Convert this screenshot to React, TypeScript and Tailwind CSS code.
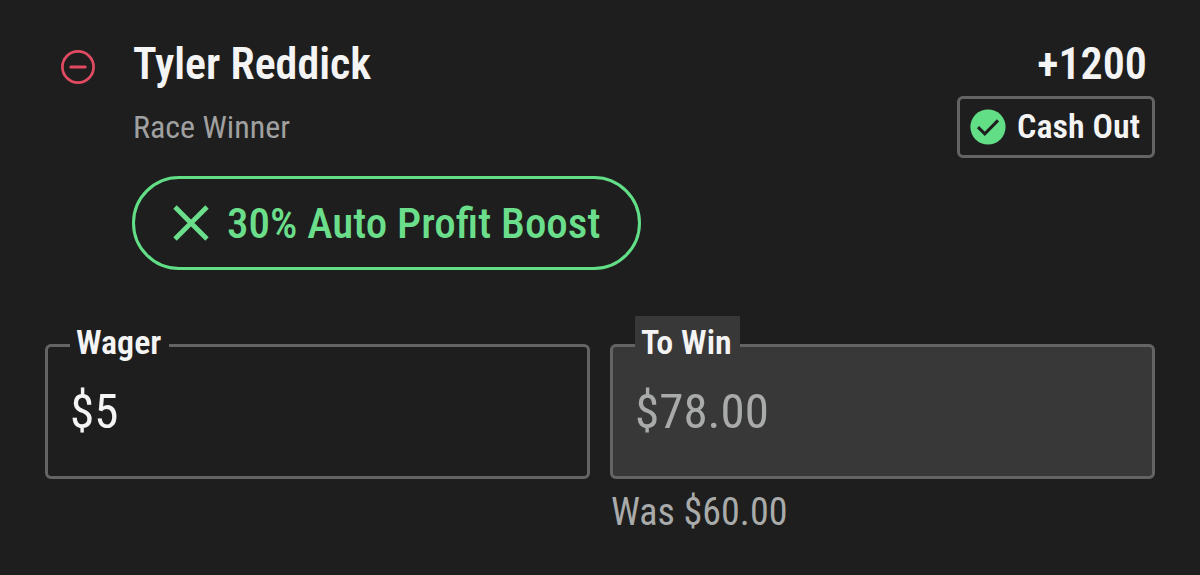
import { useState } from 'react';
import { clsx } from 'clsx';

interface MoneyFieldProps {
    id: string;
    label: string;
    value: string;
    note?: string;
    onChange?: (value: string) => void;
}

function MoneyField({ id, label, value, note, onChange }: MoneyFieldProps) {
    const readOnly = !onChange;

    return (
        <div className="min-w-0 flex-1">
            <fieldset
                className={clsx(
                    'min-w-0 rounded-md border-3 border-[#636564] px-[22px] pb-[26px]',
                    readOnly && 'bg-[#383838]'
                )}
            >
                <legend className={clsx('pr-2 pb-[6px] pl-[6px]', readOnly && 'bg-[#383838]')}>
                    <label htmlFor={id} className="block text-[34px] leading-[52px] font-semibold text-[#f4f4f4]">
                        {label}
                    </label>
                </legend>
                <input
                    id={id}
                    type="text"
                    inputMode="decimal"
                    value={value}
                    readOnly={readOnly}
                    onChange={(e) => onChange?.(e.target.value)}
                    className={clsx(
                        'block h-[76px] w-full bg-transparent text-[49px] leading-[76px] outline-none',
                        readOnly ? 'text-[#a9abaa]' : 'text-[#f4f4f4]'
                    )}
                />
            </fieldset>
            {note && <p className="pl-px text-[38px] leading-[66px] text-[#a9abaa]">{note}</p>}
        </div>
    );
}

function MinusCircle() {
    return (
        <svg viewBox="0 0 34 34" className="size-[34px]" fill="none" stroke="#e04b62" aria-hidden="true">
            <circle cx="17" cy="17" r="15.6" strokeWidth="2.7" />
            <path d="M9.8 17h14.4" strokeWidth="3" strokeLinecap="round" />
        </svg>
    );
}

function CheckBadge() {
    return (
        <svg viewBox="0 0 36 36" className="size-9" fill="none" aria-hidden="true">
            <circle cx="18" cy="18" r="17.6" fill="#62de86" />
            <path d="M8 18.2l6.8 6.6L28 11.4" stroke="#1e1e1e" strokeWidth="3" />
        </svg>
    );
}

function Cross() {
    return (
        <svg viewBox="0 0 36 36" className="size-9" fill="none" stroke="#6bde8b" strokeWidth="4.8" aria-hidden="true">
            <path d="M2 2l32 32M34 2L2 34" />
        </svg>
    );
}

export default function App() {
    const [wager, setWager] = useState('$5');

    return (
        <main className="min-h-screen bg-[#1e1e1e] px-[45px] pt-9 font-['Roboto_Condensed',Roboto,sans-serif] text-[#f4f4f4]">
            <div className="flex items-start pl-4">
                <button type="button" aria-label="Remove selection" className="mt-[14px] mr-[37px] shrink-0">
                    <MinusCircle />
                </button>
                <div className="min-w-0 flex-1">
                    <h1 className="pl-px text-[44px] leading-[56px] font-semibold">Tyler Reddick</h1>
                    <p className="mt-[11px] pl-px text-[32px] leading-[48px] text-[#a0a0a0]">Race Winner</p>
                    <button
                        type="button"
                        className="mt-[25px] flex h-[94px] items-center gap-[18px] rounded-full border-3 border-[#62de86] px-[38px] text-[43px] font-medium text-[#6bde8b]"
                    >
                        <Cross />
                        30% Auto Profit Boost
                    </button>
                </div>
                <div className="flex shrink-0 flex-col items-end">
                    <span className="pr-2 text-[44px] leading-[56px] font-semibold">+1200</span>
                    <button
                        type="button"
                        className="mt-1 flex h-[62px] items-center gap-[11px] rounded-md border-3 border-[#636564] pr-3 pl-[10px] text-[34px] leading-[48px] font-semibold"
                    >
                        <CheckBadge />
                        <span className="pb-0.5">Cash Out</span>
                    </button>
                </div>
            </div>

            <div className="mt-[46px] flex items-start gap-5">
                <MoneyField id="wager" label="Wager" value={wager} onChange={setWager} />
                <MoneyField id="to-win" label="To Win" value="$78.00" note="Was $60.00" />
            </div>
        </main>
    );
}
